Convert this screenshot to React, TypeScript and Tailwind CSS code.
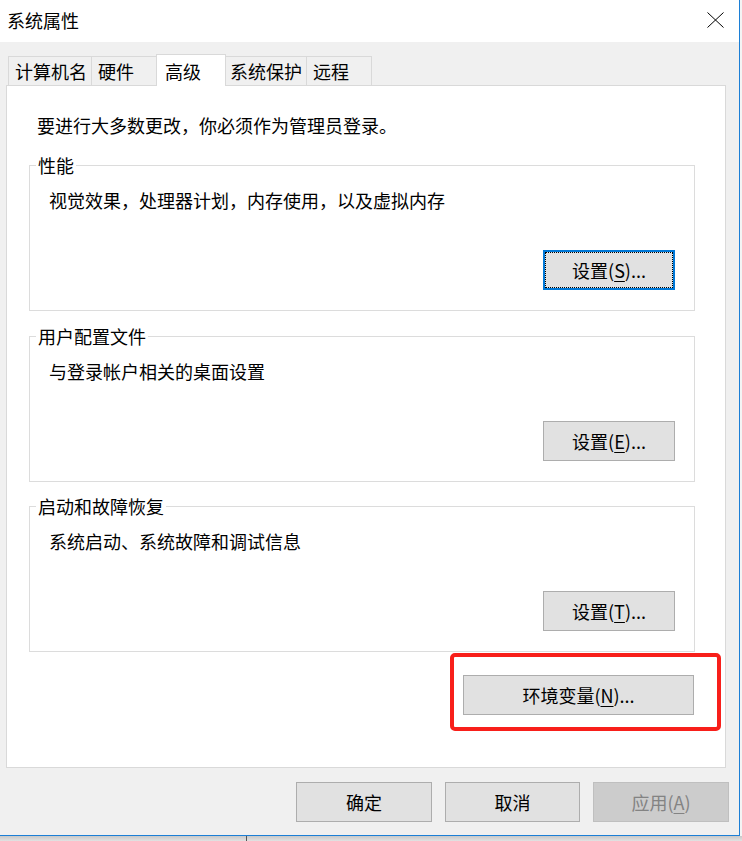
import React from "react";

const font = "font-['Noto_Sans_CJK_SC','Microsoft_YaHei',sans-serif]";

function Mnemonic({ text, letter, rest }: { text: string; letter: string; rest: string }) {
  return (
    <span>
      {text}(<span className="underline underline-offset-[3px]">{letter}</span>){rest}
    </span>
  );
}

function WinButton({
  children,
  focused,
  disabled,
  className = "",
}: {
  children: React.ReactNode;
  focused?: boolean;
  disabled?: boolean;
  className?: string;
}) {
  if (focused) {
    return (
      <div
        className={`relative flex items-center justify-center border-2 border-[#0078d7] bg-[#e1e1e1] text-[18px] leading-[24px] text-black ${className}`}
      >
        <span className="absolute inset-0 border border-dotted border-black" />
        {children}
      </div>
    );
  }
  return (
    <div
      className={`flex items-center justify-center border ${
        disabled
          ? "border-[#bfbfbf] bg-[#cccccc] text-[#838383]"
          : "border-[#adadad] bg-[#e1e1e1] text-black"
      } text-[18px] leading-[24px] ${className}`}
    >
      {children}
    </div>
  );
}

function Group({
  title,
  desc,
  button,
  focused,
  className = "",
}: {
  title: string;
  desc: string;
  button: React.ReactNode;
  focused?: boolean;
  className?: string;
}) {
  return (
    <fieldset className={`w-[666px] border border-[#dcdcdc] ${className}`}>
      <legend className="ml-[6px] px-[2px] text-[18px] leading-[24px]">{title}</legend>
      <div className="flex flex-col pb-[20px] pl-[19px] pr-[19px]">
        <div className="mt-[11px] text-[18px] leading-[24px]">{desc}</div>
        <div className="mt-[38px] flex justify-end">
          <WinButton focused={focused} className="h-[40px] w-[132px]">
            {button}
          </WinButton>
        </div>
      </div>
    </fieldset>
  );
}

function Tab({
  label,
  className,
  selected,
}: {
  label: string;
  className: string;
  selected?: boolean;
}) {
  return (
    <div
      className={`border-[#d9d9d9] text-[18px] leading-[24px] ${
        selected ? "h-[32px] border-x border-t bg-white pl-[8px] pt-[4px]" : "mb-[1px] h-[29px] border-t bg-[#f0f0f0] pt-[2px]"
      } ${className}`}
    >
      {label}
    </div>
  );
}

export default function App() {
  return (
    <div className={`relative h-[841px] w-[742px] overflow-hidden bg-[#f4f4f4] text-black ${font}`}>
      <div className="flex h-[836px] w-[740px] flex-col border-b border-r border-[#1c7fd6] bg-[#f0f0f0]">
        {/* title bar */}
        <div className="flex h-[42px] shrink-0 items-center justify-between bg-white pl-[7px] pr-[15px]">
          <span className="text-[18px] leading-[24px] -mt-[2px]">系统属性</span>
          <svg width="17" height="16" viewBox="0 0 17 16" className="-mt-[2px]">
            <path d="M0.5 0.5 L16.5 15.5 M16.5 0.5 L0.5 15.5" stroke="#000" strokeWidth="1" fill="none" />
          </svg>
        </div>

        <div className="flex flex-col pl-[6px] pt-[12px]">
          {/* tabs */}
          <div className="relative z-10 -mb-[1px] ml-[2px] flex h-[32px] items-end">
            <Tab label="计算机名" className="w-[83px] border-l pl-[6px]" />
            <Tab label="硬件" className="w-[65px] border-l pl-[6px]" />
            <Tab label="高级" className="w-[70px]" selected />
            <Tab label="系统保护" className="w-[81px] border-r pl-[4px]" />
            <Tab label="远程" className="w-[65px] border-r pl-[6px]" />
          </div>

          {/* panel */}
          <div className="flex h-[683px] w-[720px] flex-col border border-[#d9d9d9] bg-white pl-[22px] pt-[27px]">
            <div className="ml-[8px] text-[18px] leading-[24px]">要进行大多数更改，你必须作为管理员登录。</div>
            <Group
              className="mt-[16px]"
              title="性能"
              desc="视觉效果，处理器计划，内存使用，以及虚拟内存"
              focused
              button={<Mnemonic text="设置" letter="S" rest="..." />}
            />
            <Group
              className="mt-[13px]"
              title="用户配置文件"
              desc="与登录帐户相关的桌面设置"
              button={<Mnemonic text="设置" letter="E" rest="..." />}
            />
            <Group
              className="mt-[12px]"
              title="启动和故障恢复"
              desc="系统启动、系统故障和调试信息"
              button={<Mnemonic text="设置" letter="T" rest="..." />}
            />
            <div className="mt-[23px] flex w-[665px] justify-end">
              <div className="relative">
                <WinButton className="h-[40px] w-[231px]">
                  <Mnemonic text="环境变量" letter="N" rest="..." />
                </WinButton>
                <div className="pointer-events-none absolute -bottom-[16px] -left-[13px] -right-[27px] -top-[22px] rounded-[5px] border-[4px] border-[#f81f1a]" />
              </div>
            </div>
          </div>

          {/* dialog buttons */}
          <div className="mt-[14px] flex justify-end gap-[13px] pr-[10px]">
            <WinButton className="h-[40px] w-[136px]">确定</WinButton>
            <WinButton className="h-[40px] w-[135px]">取消</WinButton>
            <WinButton disabled className="h-[40px] w-[136px]">
              <Mnemonic text="应用" letter="A" rest="" />
            </WinButton>
          </div>
        </div>
      </div>

      {/* desktop behind the window */}
      <div className="flex h-[5px] w-[742px] bg-gradient-to-b from-[#c8c8c8] to-[#e2e2e2]">
        <div className="ml-[246px] h-full w-[1px] bg-[#555555]" />
      </div>
    </div>
  );
}
